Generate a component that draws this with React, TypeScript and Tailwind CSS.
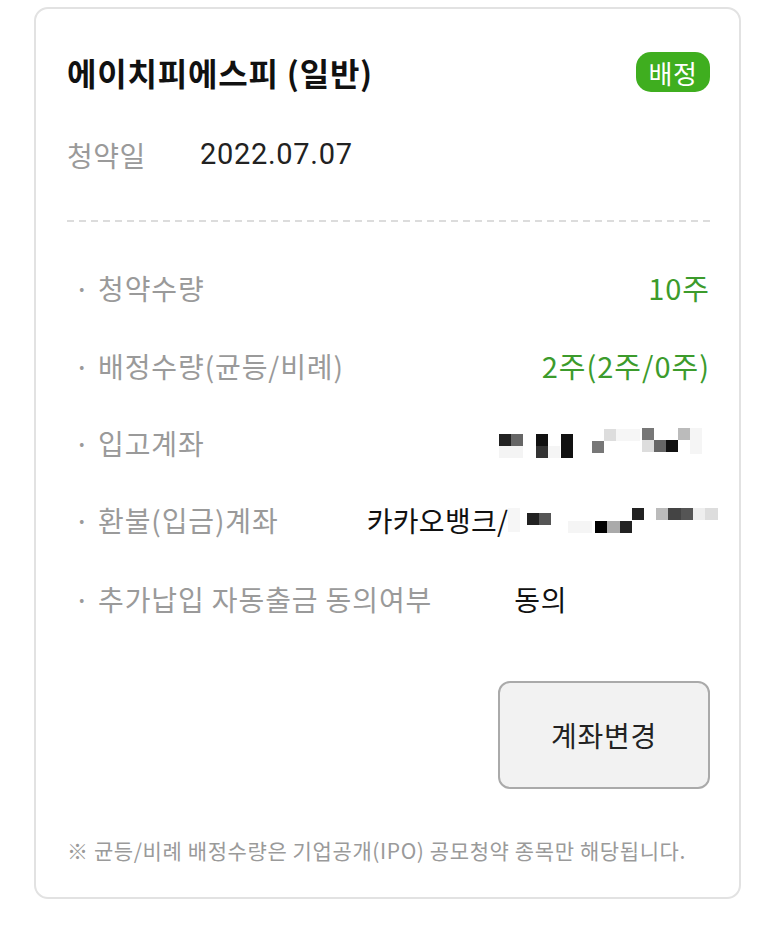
import React from "react";

const FONT = { fontFamily: '"Noto Sans CJK KR", "Noto Sans", sans-serif' };

type R = [number, number, number, number, string];

function Mosaic({ w, h, rects }: { w: number; h: number; rects: R[] }) {
  return (
    <svg width={w} height={h} viewBox={`0 0 ${w} ${h}`} className="block shrink-0">
      {rects.map(([x, y, rw, rh, c], i) => (
        <rect key={i} x={x} y={y} width={rw} height={rh} fill={c} />
      ))}
    </svg>
  );
}

const mosaic1: R[] = [
  [4, 20, 24, 12, "#f4f4f4"],
  [53, 20, 12, 12, "#f5f5f5"],
  [121, 3, 24, 12, "#f6f6f6"],
  [195, 2, 12, 26, "#f5f5f5"],
  [4, 8, 12, 12, "#222222"],
  [16, 8, 12, 12, "#666666"],
  [41, 8, 12, 12, "#111111"],
  [41, 20, 12, 12, "#333333"],
  [66, 8, 12, 12, "#111111"],
  [66, 20, 12, 12, "#111111"],
  [97, 15, 12, 12, "#777777"],
  [109, 3, 12, 12, "#dddddd"],
  [147, 2, 12, 12, "#777777"],
  [183, 2, 12, 12, "#bbbbbb"],
  [147, 14, 12, 12, "#dddddd"],
  [159, 14, 12, 12, "#666666"],
  [171, 14, 12, 12, "#111111"],
];

const mosaic2: R[] = [
  [0, 5, 12, 24, "#f6f6f6"],
  [60, 18, 24, 12, "#f5f5f5"],
  [19, 10, 12, 12, "#222222"],
  [31, 10, 12, 12, "#555555"],
  [87, 18, 12, 12, "#000000"],
  [99, 18, 13, 12, "#aaaaaa"],
  [112, 18, 12, 12, "#222222"],
  [124, 5, 12, 12, "#222222"],
  [148, 5, 12, 12, "#bbbbbb"],
  [160, 5, 13, 12, "#444444"],
  [173, 5, 12, 12, "#555555"],
  [185, 5, 12, 12, "#eeeeee"],
  [197, 5, 13, 12, "#dddddd"],
];

function Label({ children }: { children: React.ReactNode }) {
  return (
    <div className="flex items-center text-[28px] tracking-[0.9px] text-[#9a9a9a] shrink-0 whitespace-nowrap">
      <span className="w-[31px] pl-[7px]">·</span>
      <span>{children}</span>
    </div>
  );
}

export default function App() {
  return (
    <div className="w-[773px] h-[926px] bg-white pt-[7px] pl-[34px]" style={FONT}>
      <div className="w-[707px] border-2 border-[#e2e2e2] rounded-[14px] pt-[43px] pb-[32px] pl-[31px] pr-[29px]">
        <div className="flex items-center justify-between h-[40px]">
          <div className="text-[32px] font-bold text-[#111] leading-none tracking-[0.8px]">
            에이치피에스피 (일반)
          </div>
          <div className="h-[40px] w-[74px] rounded-[15px] bg-[#3fae1f] text-white text-[26px] tracking-[0.5px] flex items-center justify-center">
            배정
          </div>
        </div>

        <div className="flex items-center h-[40px] mt-[43px]">
          <span className="text-[28px] tracking-[0.5px] text-[#9a9a9a] w-[133px]">청약일</span>
          <span className="text-[29px] text-[#222] tracking-[0.7px]" style={{ fontFamily: 'Roboto, "Noto Sans CJK KR", sans-serif' }}>
            2022.07.07
          </span>
        </div>

        <div className="mt-[45px] h-[2px] bg-[repeating-linear-gradient(to_right,#dcdcdc_0_7px,transparent_7px_12px)]" />

        <div className="mt-[27px]">
          <div className="flex items-center justify-between h-[78px]">
            <Label>청약수량</Label>
            <span className="text-[29px] tracking-[1px] text-[#3c9b2c]">10주</span>
          </div>
          <div className="flex items-center justify-between h-[78px]">
            <Label>배정수량(균등/비례)</Label>
            <span className="text-[29px] tracking-[1px] text-[#3c9b2c]">2주(2주/0주)</span>
          </div>
          <div className="flex items-center justify-between h-[76px]">
            <Label>입고계좌</Label>
            <div className="mr-[5px]">
              <Mosaic w={210} h={34} rects={mosaic1} />
            </div>
          </div>
          <div className="flex items-center h-[78px]">
            <Label>환불(입금)계좌</Label>
            <div className="flex items-center ml-[88px] shrink-0 whitespace-nowrap">
              <span className="text-[28px] tracking-[0.3px] text-[#111]">카카오뱅크/</span>
              <Mosaic w={210} h={34} rects={mosaic2} />
            </div>
          </div>
          <div className="flex items-center h-[80px]">
            <Label>추가납입 자동출금 동의여부</Label>
            <span className="text-[28px] tracking-[0.8px] text-[#111] ml-[82px]">동의</span>
          </div>
        </div>

        <div className="flex justify-end mt-[42px]">
          <button className="w-[212px] h-[108px] bg-[#f2f2f2] border-2 border-[#aaaaaa] rounded-[12px] text-[28px] tracking-[0.8px] text-[#222] flex items-center justify-center">
            계좌변경
          </button>
        </div>

        <div className="mt-[46px] text-[21px] tracking-[0.6px] text-[#9a9a9a] leading-[30px] whitespace-nowrap">
          ※ 균등/비례 배정수량은 기업공개(IPO) 공모청약 종목만 해당됩니다.
        </div>
      </div>
    </div>
  );
}
